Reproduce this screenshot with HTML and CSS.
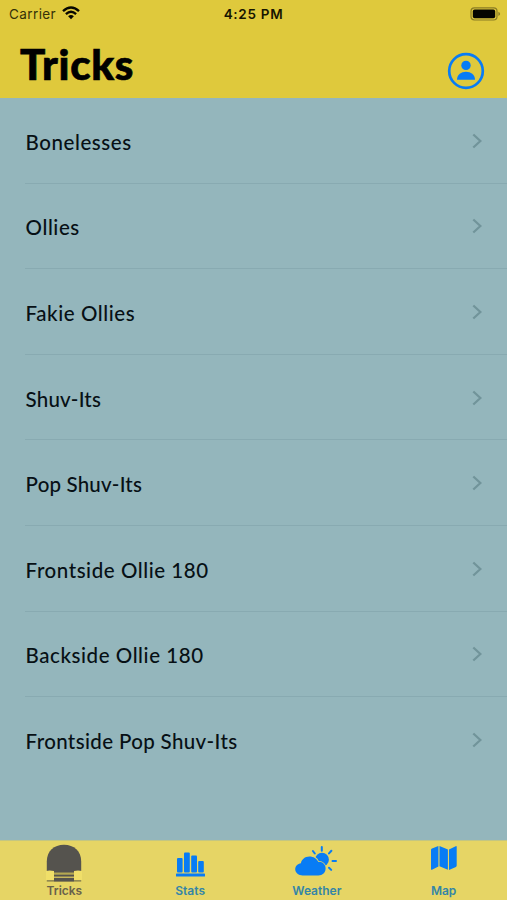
FILE: index.html
```html
<!DOCTYPE html>
<html lang="en">
<head>
<meta charset="utf-8">
<title>Tricks</title>
<link rel="stylesheet" href="styles.css">
</head>
<body>
<svg class="defs" width="0" height="0"><symbol id="chevron" viewBox="0 0 10 16"><path d="M1.3 1.5 8.400 8 1.300 14.500" fill="none" stroke="currentColor" stroke-width="2.300"/></symbol></svg>
<div class="app">
  <header class="header">
    <div class="status">
      <div class="carrier"><span>Carrier</span>
        <svg width="18" height="14" viewBox="0 0 18 14" fill="none" stroke="#080800" stroke-width="2.4"><path d="M1 5.1Q9-2.1 17 5.1M3.9 8.1Q9 3.6 14.1 8.1"/><path d="M6.1 10.3Q9 7.8 11.9 10.3L9 13.2Z" fill="#080800" stroke="none"/></svg>
      </div>
      <span class="time">4:25 PM</span>
      <svg class="battery" width="31" height="14" viewBox="0 0 31 14"><rect x="1" y=".8" width="26" height="12.2" rx="3.4" fill="none" stroke="#8a7c25" stroke-width="1.2"/><rect x="2.8" y="2.6" width="22.4" height="8.6" rx="1.8" fill="#050500"/><path d="M28.4 4.7q3.4 2.2 0 4.4Z" fill="#8a7c25"/></svg>
    </div>
    <div class="titlebar">
      <h1>Tricks</h1>
      <svg class="profile" width="38" height="38" viewBox="0 0 38 38"><circle cx="19" cy="19" r="16.800" fill="none" stroke="#087cf5" stroke-width="2.700"/><g fill="#087cf5"><circle cx="19" cy="13.400" r="4.700"/><path d="M10 27.800C10 22.700 14.200 19.800 19 19.800s9 2.900 9 8Z"/></g></svg>
    </div>
  </header>
  <ul class="list">
    <li><span>Bonelesses</span><svg class="chev"><use href="#chevron"/></svg></li>
    <li><span>Ollies</span><svg class="chev"><use href="#chevron"/></svg></li>
    <li><span>Fakie Ollies</span><svg class="chev"><use href="#chevron"/></svg></li>
    <li><span class="tight">Shuv-Its</span><svg class="chev"><use href="#chevron"/></svg></li>
    <li><span class="tight">Pop Shuv-Its</span><svg class="chev"><use href="#chevron"/></svg></li>
    <li><span>Frontside Ollie 180</span><svg class="chev"><use href="#chevron"/></svg></li>
    <li><span>Backside Ollie 180</span><svg class="chev"><use href="#chevron"/></svg></li>
    <li><span class="snug">Frontside Pop Shuv-Its</span><svg class="chev"><use href="#chevron"/></svg></li>
  </ul>
  <nav class="tabs">
    <a class="tab active">
      <svg width="44" height="42" viewBox="0 0 44 42"><path d="M4.8 35V20.5C4.8 10 12 3.8 22 3.8s17.2 6.2 17.2 16.7V35H4.8Z" fill="#55534e"/><path d="M4 30q3.500-1 8 0v9H4zM32 30q4-1 8 0v9h-8z" fill="#f0df69"/><path d="M12 32.600h20" stroke="#b5a852" stroke-width="2.200"/><path d="M12 35.700h20" stroke="#8a8050" stroke-width="1.300"/><path d="M4.800 39.800h34.400" stroke="#77704b" stroke-width="1.300"/><path d="M12 37h20v3.400H12z" fill="#55534e"/></svg>
      <span>Tricks</span>
    </a>
    <a class="tab">
      <svg width="44" height="42" viewBox="0 0 44 42" fill="#087cf5"><rect x="9" y="17" width="5.600" height="14.500" rx="1"/><rect x="16" y="11.500" width="5.800" height="20" rx="1"/><rect x="23.200" y="14.500" width="5.800" height="17" rx="1"/><rect x="30.200" y="20" width="5.600" height="11.500" rx="1"/><rect x="8" y="32.600" width="29" height="2.900" rx=".6"/></svg>
      <span>Stats</span>
    </a>
    <a class="tab">
      <svg width="44" height="42" viewBox="0 0 44 42"><g fill="none" stroke="#087cf5" stroke-width="2" stroke-linecap="round" transform="translate(-.5 -.8)"><path d="M27.300 6.800v3.700M18.400 10.800l1.900 2.500M36.900 10.600l-2.400 2.600M38 20.700h3.500M34.500 27.500l2.200 2.200"/></g><circle cx="27" cy="18.700" r="6.900" fill="#087cf5"/><path d="M7.600 34.500C3.900 34.500.2 31.900.2 28.300c0-3.300 2.600-5.600 5.700-6.100C6.600 18.200 10 15.400 14.400 15.400c4.100 0 7.400 2.100 8.900 5.500 4.200-.4 7.300 2.600 7.300 6.600 0 4.100-3 7-7.300 7Z" fill="#087cf5" stroke="#e6d565" stroke-width="1.600" paint-order="stroke"/></svg>
      <span>Weather</span>
    </a>
    <a class="tab">
      <svg width="44" height="42" viewBox="0 0 44 42" fill="#087cf5"><path d="M9 9q0-1 1-1.400L16.400 5v20.400L10 28.700q-1 .5-1-.7zM17.500 5.100l8.400 3.500v20.200l-8.400-3.500zM27 8.500l6.700-3.300q1-.4 1 .7v18.700q0 .9-.8 1.400l-6.900 3z"/></svg>
      <span>Map</span>
    </a>
  </nav>
</div>
</body>
</html>
```
FILE: styles.css
```css
* { box-sizing: border-box; }
body { margin: 0; }
.defs { display: block; }
.app {
  width: 507px;
  height: 900px;
  display: flex;
  flex-direction: column;
  background: #94b6bc;
  font-family: Lato, sans-serif;
  color: #071015;
}
.header { height: 98px; background: #dfc93c; }
.status {
  height: 28px;
  display: grid;
  grid-template-columns: 1fr auto 1fr;
  align-items: center;
  padding: 0 6px 0 9px;
  font-family: Inter, sans-serif;
  font-size: 13.5px;
}
.carrier { display: flex; align-items: center; gap: 6px; color: #353108; letter-spacing: .4px; }
.carrier svg { margin-top: -2px; }
.time { font-weight: 600; color: #171500; letter-spacing: .7px; margin: 0 3px 0 0; }
.battery { justify-self: end; }
.titlebar { display: flex; justify-content: space-between; padding: 0 22px 0 20px; }
h1 { margin: 8px 0 0; font-size: 42px; line-height: 56px; font-weight: 900; letter-spacing: .7px; color: #000; -webkit-text-stroke: .7px #000; }
.profile { margin-top: 24px; }
.list { margin: 0; padding: 0 0 0 25px; list-style: none; flex: 1; }
.list li {
  height: 85.6px;
  display: flex;
  justify-content: space-between;
  align-items: center;
  padding: 3px 25px 0 .6px;
  border-bottom: 1px solid #88aab1;
  font-size: 20.5px;
  font-weight: 500;
  letter-spacing: .56px;
}
.list .tight { letter-spacing: .18px; }
.list .snug { letter-spacing: .36px; }
.list li:last-child { border-color: transparent; }
.chev { width: 10px; height: 16px; color: #71949a; margin-top: -2px; }
.tabs {
  height: 60px;
  display: grid;
  grid-template-columns: repeat(4, 1fr);
  background: #e6d565;
  border-top: 1px solid #c4c681;
}
.tab {
  display: flex;
  flex-direction: column;
  align-items: center;
  font-family: Inter, sans-serif;
  font-size: 12px;
  font-weight: 600;
  line-height: 16px;
  color: #3485a7;
}
.tab.active { color: #68624b; padding-left: 2px; }
```
